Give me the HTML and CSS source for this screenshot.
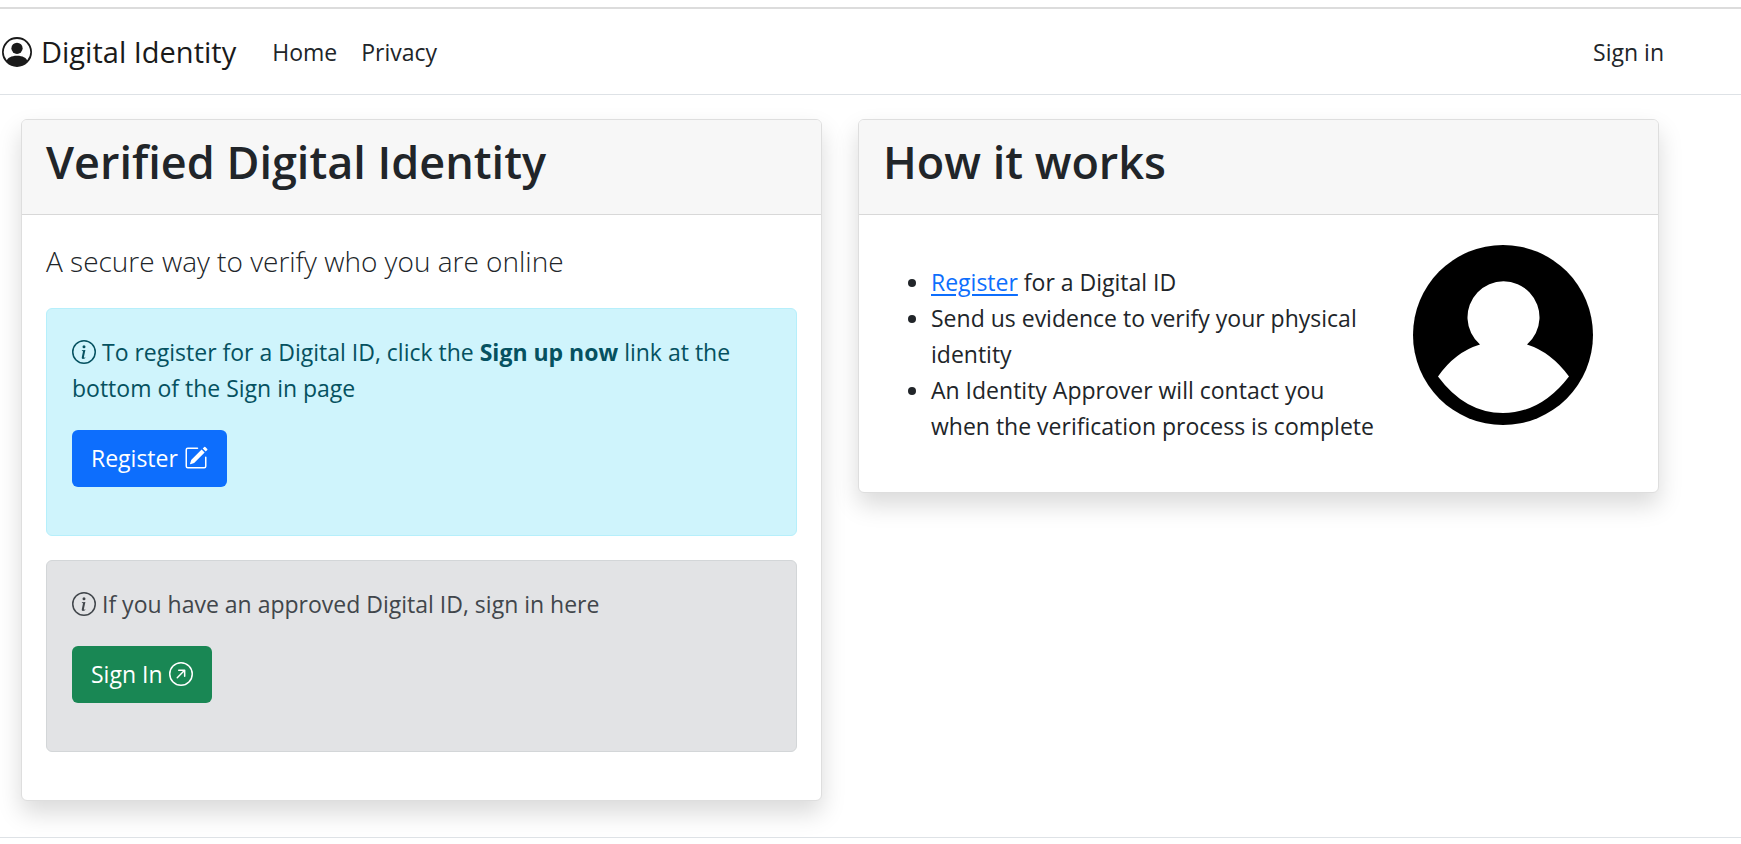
FILE: index.html
```html
<!DOCTYPE html>
<html lang="en">
<head>
<meta charset="utf-8">
<meta name="viewport" content="width=device-width, initial-scale=1">
<title>Digital Identity</title>
<link rel="stylesheet" href="styles.css">
</head>
<body>
<header class="site-header">
  <nav class="navbar">
    <a class="brand" href="#">
      <svg class="brand-icon" viewBox="0 0 16 16" fill="currentColor" aria-hidden="true"><path d="M11 6a3 3 0 1 1-6 0 3 3 0 0 1 6 0z"/><path fill-rule="evenodd" d="M0 8a8 8 0 1 1 16 0A8 8 0 0 1 0 8zm8-7a7 7 0 0 0-5.468 11.37C3.242 11.226 4.805 10 8 10s4.757 1.225 5.468 2.37A7 7 0 0 0 8 1z"/></svg>
      <span>Digital Identity</span>
    </a>
    <a class="nav-link" href="#">Home</a>
    <a class="nav-link" href="#">Privacy</a>
    <a class="nav-link nav-end" href="#">Sign in</a>
  </nav>
</header>
<main class="cards">
  <section class="card">
    <div class="card-header"><h1 class="card-title">Verified Digital Identity</h1></div>
    <div class="card-body">
      <p class="lead">A secure way to verify who you are online</p>
      <div class="alert alert-info">
        <p class="alert-text"><svg class="icon" viewBox="0 0 16 16" fill="currentColor" aria-hidden="true"><path d="M8 15A7 7 0 1 1 8 1a7 7 0 0 1 0 14zm0 1A8 8 0 1 0 8 0a8 8 0 0 0 0 16z"/><path d="m8.930 6.588-2.290.287-.082.380.450.083c.294.070.352.176.288.469l-.738 3.468c-.194.897.105 1.319.808 1.319.545 0 1.178-.252 1.465-.598l.088-.416c-.200.176-.492.246-.686.246-.275 0-.375-.193-.304-.533L8.930 6.588zM9 4.500a1 1 0 1 1-2 0 1 1 0 0 1 2 0z"/></svg> To register for a Digital ID, click the <strong>Sign up now</strong> link at the bottom of the Sign in page</p>
        <button class="btn btn-primary" type="button">Register <svg class="icon" viewBox="0 0 16 16" fill="currentColor" aria-hidden="true"><path d="M15.502 1.940a.5.5 0 0 1 0 .706L14.459 3.690l-2-2L13.502.646a.5.5 0 0 1 .707 0l1.293 1.293zm-1.750 2.456-2-2L4.939 9.210a.5.5 0 0 0-.121.196l-.805 2.414a.25.25 0 0 0 .316.316l2.414-.805a.5.5 0 0 0 .196-.120l6.813-6.814z"/><path fill-rule="evenodd" d="M1 13.500A1.500 1.500 0 0 0 2.500 15h11a1.500 1.500 0 0 0 1.500-1.500v-6a.5.5 0 0 0-1 0v6a.5.5 0 0 1-.5.5h-11a.5.5 0 0 1-.5-.5v-11a.5.5 0 0 1 .5-.5H9a.5.5 0 0 0 0-1H2.500A1.500 1.500 0 0 0 1 2.500v11z"/></svg></button>
      </div>
      <div class="alert alert-muted">
        <p class="alert-text"><svg class="icon" viewBox="0 0 16 16" fill="currentColor" aria-hidden="true"><path d="M8 15A7 7 0 1 1 8 1a7 7 0 0 1 0 14zm0 1A8 8 0 1 0 8 0a8 8 0 0 0 0 16z"/><path d="m8.930 6.588-2.290.287-.082.380.450.083c.294.070.352.176.288.469l-.738 3.468c-.194.897.105 1.319.808 1.319.545 0 1.178-.252 1.465-.598l.088-.416c-.200.176-.492.246-.686.246-.275 0-.375-.193-.304-.533L8.930 6.588zM9 4.500a1 1 0 1 1-2 0 1 1 0 0 1 2 0z"/></svg> If you have an approved Digital ID, sign in here</p>
        <button class="btn btn-success" type="button">Sign In <svg class="icon" viewBox="0 0 16 16" fill="currentColor" aria-hidden="true"><path fill-rule="evenodd" d="M1 8a7 7 0 1 0 14 0A7 7 0 0 0 1 8zm15 0A8 8 0 1 1 0 8a8 8 0 0 1 16 0zM5.854 10.803a.5.5 0 1 1-.708-.707L9.243 6H6.475a.5.5 0 1 1 0-1h3.975a.5.5 0 0 1 .5.5v3.975a.5.5 0 1 1-1 0V6.707l-4.096 4.096z"/></svg></button>
      </div>
    </div>
  </section>
  <section class="card">
    <div class="card-header"><h2 class="card-title">How it works</h2></div>
    <div class="card-body steps">
      <ul class="step-list">
        <li><a class="link" href="#">Register</a> for a Digital ID</li>
        <li>Send us evidence to verify your physical identity</li>
        <li>An Identity Approver will contact you when the verification process is complete</li>
      </ul>
      <svg class="avatar" viewBox="0 0 180 180" role="img" aria-label="Person"><circle cx="90" cy="90" r="90" fill="#000"/><path fill="#fff" d="M67 99.500A36 36 0 1 1 114 99.500Q138 107 156 131.500Q128 168 90 168T25 131.500Q42 107 67 99.500z"/></svg>
    </div>
  </section>
</main>
<footer class="site-footer"></footer>
</body>
</html>
```
FILE: styles.css
```css
*, *::before, *::after { box-sizing: border-box; }

body {
  margin: 0;
  padding-top: 7px;
  background: #fff;
  color: #212529;
  font-family: "Open Sans", "Noto Sans", sans-serif;
  font-size: 23px;
  line-height: 36px;
}

h1, h2, p, ul { margin: 0; }

.site-header {
  border-top: 2px solid #dcdcdc;
  border-bottom: 1px solid #dee2e6;
}

.navbar {
  display: flex;
  align-items: center;
  min-height: 85px;
  padding: 12px 65px 12px 2px;
}

.brand {
  display: flex;
  align-items: center;
  gap: 9px;
  margin-right: 24px;
  color: #1a1a1a;
  font-size: 29px;
  text-decoration: none;
}

.brand-icon { width: 30px; height: 30px; }

.nav-link {
  padding: 0 12px;
  color: #212529;
  text-decoration: none;
}

.nav-end { margin-left: auto; }

.cards {
  display: grid;
  grid-template-columns: 1fr 1fr;
  align-items: start;
  gap: 36px;
  padding: 24px 82px 36px 21px;
}

.card {
  background: #fff;
  border: 1px solid #dedede;
  border-radius: 6px;
  box-shadow: 0 12px 24px rgba(0, 0, 0, 0.15);
}

.card-header {
  padding: 13px 24px 23px;
  background: #f7f7f7;
  border-bottom: 1px solid #d8d8d8;
  border-radius: 5px 5px 0 0;
}

.card-title {
  font-size: 45px;
  font-weight: 600;
  line-height: 58px;
}

.card-body { padding: 24px; }

.lead {
  margin-bottom: 24px;
  font-size: 28px;
  font-weight: 300;
  line-height: 45px;
}

.alert {
  margin-bottom: 24px;
  padding: 25px 25px 48px;
  border: 1px solid;
  border-radius: 6px;
}

.alert-info {
  background: #cff4fc;
  border-color: #b6effb;
  color: #055160;
}

.alert-muted {
  background: #e2e3e5;
  border-color: #d3d6d8;
  color: #41464b;
}

.alert-text { margin-bottom: 24px; }

.icon {
  width: 24px;
  height: 24px;
  vertical-align: -3px;
}

.btn {
  display: block;
  padding: 10px 19px;
  border: 0;
  border-radius: 6px;
  color: #fff;
  font: inherit;
  line-height: 37px;
  white-space: nowrap;
}

.btn-primary { background: #0d6efd; }
.btn-success { background: #198754; }

.link { color: #0d6efd; text-underline-offset: 3px; }

.steps {
  display: grid;
  grid-template-columns: 2fr 1fr;
}

.step-list {
  padding: 25px 0 24px 48px;
}

.avatar {
  justify-self: center;
  width: 180px;
  height: 180px;
  margin: 6px 12px 0 0;
}

.site-footer { border-top: 1px solid #dee2e6; }
```
